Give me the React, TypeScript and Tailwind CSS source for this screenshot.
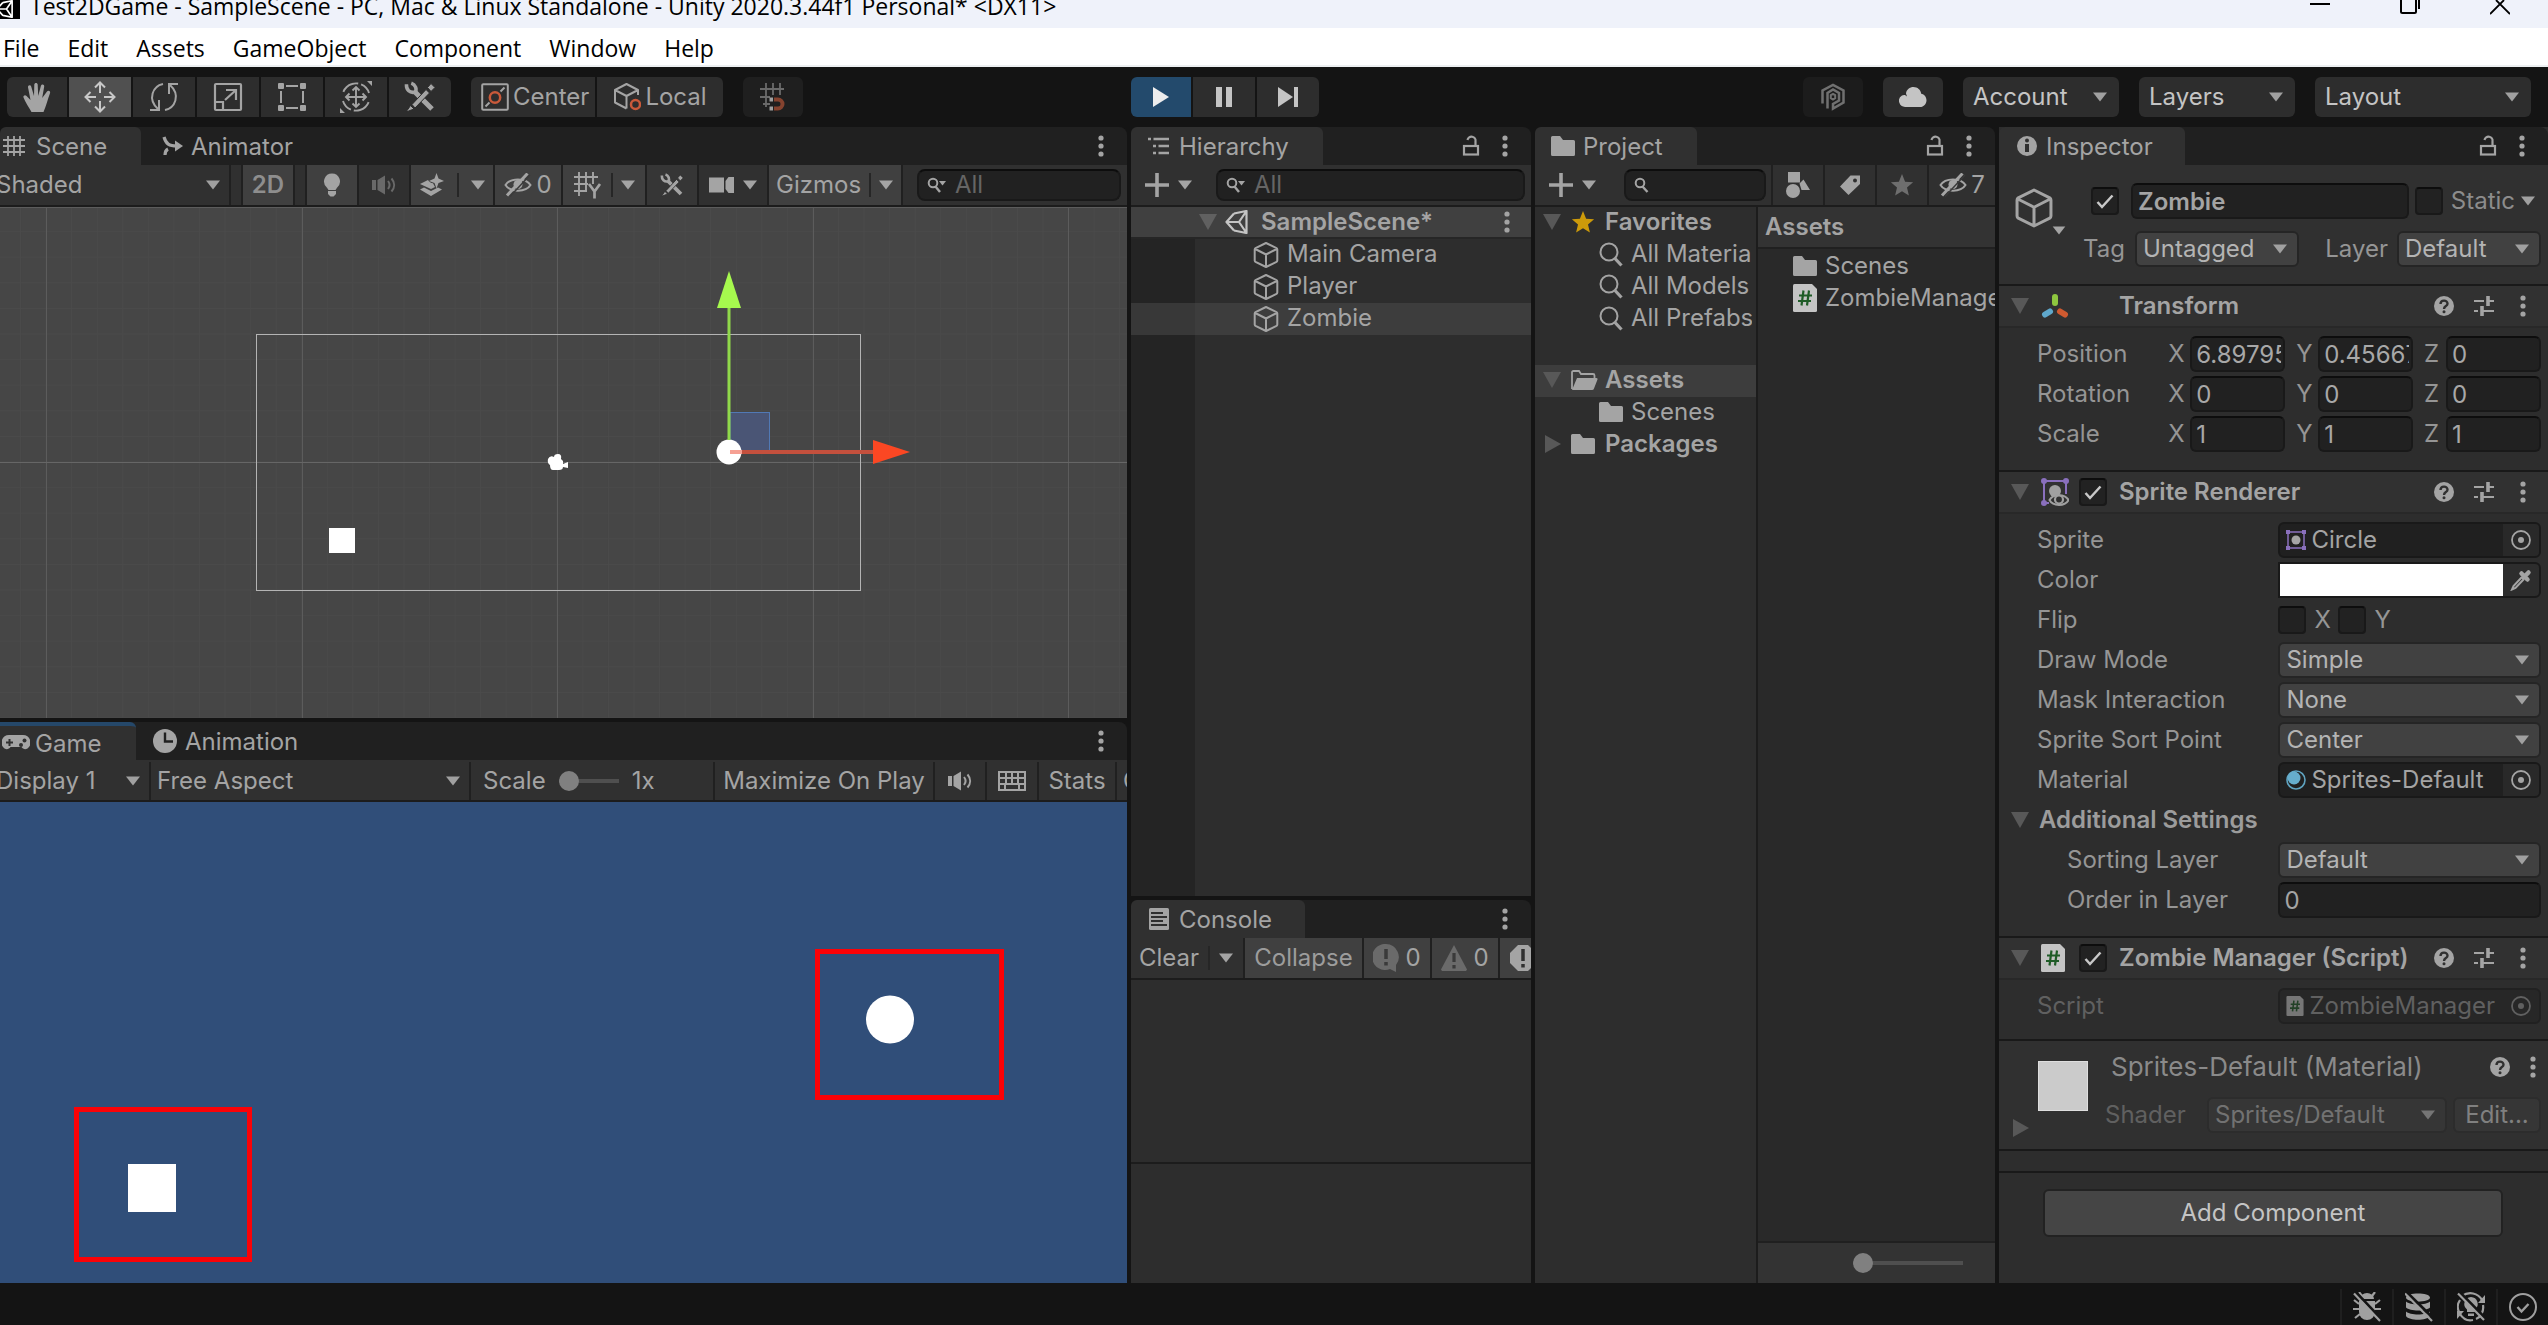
import React from "react";

type IconProps = { className?: string };

function Icon({ box, className, children }: { box: string; className: string; children: React.ReactNode }) {
  return (
    <svg viewBox={box} className={"shrink-0 " + className} fill="none" stroke="currentColor" aria-hidden="true">
      {children}
    </svg>
  );
}

const Down = ({ className = "w-[14px] h-[10px]" }: IconProps) => (
  <Icon box="0 0 14 10" className={className}>
    <path d="M0 0.5h14L7 9.5z" fill="currentColor" stroke="none" />
  </Icon>
);

const Dots = () => (
  <Icon box="0 0 6 22" className="w-[6px] h-[22px]">
    <g fill="currentColor" stroke="none">
      <circle cx="3" cy="3" r="2.6" />
      <circle cx="3" cy="11" r="2.6" />
      <circle cx="3" cy="19" r="2.6" />
    </g>
  </Icon>
);

const Lock = () => (
  <Icon box="0 0 18 22" className="w-[18px] h-[22px]">
    <rect x="2" y="11" width="14" height="8.5" strokeWidth="2.2" />
    <path d="M13.5 11V6.5a4 4 0 0 0-8-1.5" strokeWidth="2.2" />
  </Icon>
);

const Foldout = ({ className = "text-[#585858]" }: IconProps) => (
  <Icon box="0 0 18 16" className={"w-[18px] h-4 " + className}>
    <path d="M0 0h18L9 16z" fill="currentColor" stroke="none" />
  </Icon>
);

const FoldoutRight = () => (
  <Icon box="0 0 16 18" className="w-4 h-[18px] text-[#585858]">
    <path d="M0 0v18L16 9z" fill="currentColor" stroke="none" />
  </Icon>
);

const Hand = () => (
  <Icon box="0 0 30 32" className="w-[30px] h-8">
    <path
      d="M9.5 30C7 25.500 3.500 20.500 1.500 15.500c-.6-1.800 1.500-3 2.800-1.700L8.500 18 6 5.200C5.700 3 8.600 2.400 9.200 4.500L12 14 12.300 2.600c.1-2.300 3.300-2.300 3.400 0L16.200 14 19 3.600c.6-2 3.600-1.400 3.200.8L20.200 16 25 9.500c1.400-1.700 3.900-.3 3 1.700C25.800 17 24 24.500 21.500 30z"
      fill="currentColor"
      stroke="none"
      transform="translate(0 1)"
    />
  </Icon>
);

const Move = () => (
  <Icon box="0 0 32 32" className="w-8 h-8 text-[#c8c8c8]">
    <g strokeWidth="2">
      <path d="M16 2v10M16 20v10M2 16h10M20 16h10" />
      <path d="M11 6.500L16 1.500l5 5M11 25.500l5 5 5-5M6.500 11l-5 5 5 5M25.500 11l5 5-5 5" />
    </g>
  </Icon>
);

const Rotate = () => (
  <Icon box="0 0 32 32" className="w-8 h-8">
    <g strokeWidth="2">
      <path d="M15 3C5 5 -1 18 10 28M2 29h9V19" />
      <path d="M17 29C27 27 33 14 22 4M30 3h-9v10" />
    </g>
  </Icon>
);

const Scale = () => (
  <Icon box="0 0 30 30" className="w-[30px] h-[30px]">
    <g strokeWidth="2.2">
      <rect x="2" y="2" width="26" height="26" rx="1" />
      <path d="M2 20h8v8M12 18L23 8M13 8h10v10" />
    </g>
  </Icon>
);

const RectTool = () => (
  <Icon box="0 0 30 30" className="w-[30px] h-[30px]">
    <g fill="currentColor" stroke="none">
      <rect x="1" y="1" width="6" height="6" rx="1" />
      <rect x="23" y="1" width="6" height="6" rx="1" />
      <rect x="1" y="23" width="6" height="6" rx="1" />
      <rect x="23" y="23" width="6" height="6" rx="1" />
    </g>
    <path d="M9 4h12M9 26h12M4 9v12M26 9v12" strokeWidth="2" />
  </Icon>
);

const TransformTool = () => (
  <Icon box="0 0 34 34" className="w-[34px] h-[34px]">
    <g strokeWidth="1.900">
      <path d="M13 4A13.500 13.500 0 0 0 4 13M21 30A13.500 13.500 0 0 0 30 21M4 21A13.500 13.500 0 0 0 21 30M30 13A13.500 13.500 0 0 0 13 4" strokeDasharray="12 3" />
      <path d="M17 7v20M7 17h20M13.500 10.500L17 7l3.500 3.500M13.500 23.500L17 27l3.500-3.500M10.500 13.500L7 17l3.500 3.500M23.500 13.500L27 17l-3.500 3.500" />
    </g>
    <path d="M28 1h5v5zM1 28v5h5z" fill="currentColor" stroke="none" />
  </Icon>
);

const Tools = ({ className = "w-8 h-8" }: IconProps) => (
  <Icon box="0 0 32 32" className={className}>
    <path d="M10 10L28 28" strokeWidth="5" strokeDasharray="8 4 20" />
    <path d="M3 2.500C2 8 5 12 10.500 11.500 13 9 12 4 8 2" strokeWidth="3.500" transform="rotate(-8 8 7)" />
    <path d="M8 23.500L22 8.500l3.500 3.500L11 27z M2 31l4.500-6.500L10 28z M23.500 6.500L27 2.500l4 4-4 4z" fill="currentColor" stroke="#2b2b2b" strokeWidth="1" />
  </Icon>
);

const Pivot = () => (
  <Icon box="0 0 28 28" className="w-7 h-7">
    <rect x="1.200" y="1.200" width="25.600" height="25.600" rx="1" strokeWidth="2" />
    <path d="M4.500 23.500l4-4M19.500 8.500l4-4" strokeWidth="2" />
    <circle cx="14" cy="14.500" r="5.200" stroke="#c8593a" strokeWidth="2.500" />
  </Icon>
);

const Cube = ({ className = "w-7 h-7" }: IconProps) => (
  <Icon box="0 0 28 28" className={className}>
    <path d="M14 2l10.500 5.200q.8.500.8 1.400v10.800q0 .9-.8 1.400L14 26 3.500 20.800q-.8-.5-.8-1.400V8.600q0-.9.8-1.400zM3.200 8L14 13.500 24.800 8M14 13.500V26" strokeWidth="2" strokeLinejoin="round" />
  </Icon>
);

const LocalCube = () => (
  <Icon box="0 0 28 30" className="w-7 h-[30px]">
    <path d="M25 13V8L13.500 2 2 8v12.500L13.500 26.500M2 8l11.500 6L25 8M13.500 14v12.500" strokeWidth="2" strokeLinejoin="round" />
    <circle cx="22.500" cy="22.500" r="4.500" stroke="#c8593a" strokeWidth="2.500" fill="#2d2d2d" />
  </Icon>
);

const Snap = () => (
  <Icon box="0 0 28 30" className="w-7 h-[30px] text-[#6a6a6a]">
    <path d="M7 1v24M14 1v12M21 1v12M1 7h24M1 15h10M4 22h7" strokeWidth="1.800" />
    <path d="M15 17.500h4a4.500 4.500 0 0 1 0 9h-4" stroke="#85432f" strokeWidth="4" />
    <path d="M10.500 15.500h3.500v4h-3.500zM10.500 24.500h3.500v4h-3.500z" fill="#a0a0a0" stroke="none" />
  </Icon>
);

const Plastic = () => (
  <Icon box="0 0 26 28" className="w-[26px] h-7 text-[#707070]">
    <path d="M2.500 20.500V7.500L13 1.800l10.500 5.700v12L13 25.500v-4.500l6-3.500V10L13 6.500 7.500 10v15.500" strokeWidth="2.500" />
    <path d="M10.800 12.200L13 11l2.200 1.200v3L13 16.500l-2.200-1.300z" strokeWidth="2" />
  </Icon>
);

const Cloud = () => (
  <Icon box="0 0 28 22" className="w-7 h-[22px] text-[#c4c4c4]">
    <path d="M6.500 21A6.200 6.200 0 0 1 3 9.500C3.800 9 5 8.700 6 9l2 1.500L7 7.500C7.500 3.500 10.800 1 14.500 1c4 0 7.200 2.800 7.700 6.700 3 .3 5.300 3.300 5.300 6.500 0 3.500-2.700 6.800-6.500 6.800z" fill="currentColor" stroke="none" />
  </Icon>
);

const GridHash = () => (
  <Icon box="0 0 22 22" className="w-[22px] h-[22px]">
    <path d="M5 1v20M11 1v20M17 1v20M0 5h22M0 11h22M0 17h22" strokeWidth="1.800" />
  </Icon>
);

const AnimatorIcon = () => (
  <Icon box="0 0 22 20" className="w-[22px] h-5">
    <path d="M2 1C4 8 7 10 15 10M3 19c0-3 1-5 3-6" strokeWidth="3.200" />
    <path d="M13 4.500L21 10l-8 5.500z" fill="currentColor" stroke="none" />
  </Icon>
);

const Bulb = () => (
  <Icon box="0 0 18 24" className="w-[18px] h-6">
    <path d="M9 .5a8 8 0 0 1 5 14.200L12.500 17h-7L4 14.700A8 8 0 0 1 9 .5zM5 18h8v3l-2.500 2.500h-3L5 21z" fill="currentColor" stroke="none" />
  </Icon>
);

const Speaker = ({ className = "" }: IconProps) => (
  <Icon box="0 0 26 20" className={"w-[26px] h-5 " + className}>
    <path d="M1 5h4v10H1zM6.500 5L14 .5v19L6.500 15z" fill="currentColor" stroke="none" />
    <path d="M17 6c2 2.500 2 5.500 0 8M20.500 3.500c3.500 4 3.500 9 0 13" strokeWidth="2" />
  </Icon>
);

const Effects = () => (
  <Icon box="0 0 26 24" className="w-[26px] h-6">
    <g fill="currentColor" stroke="none">
      <path d="M1 16.500l4-2 7 3.500 7-3.500 4 2L12 23z" />
      <path d="M1 11l8-4c1 2 3 3 5 3.200L16 14l-4 2z" />
      <path d="M17.500 0l2 5.500L25 8l-5.500 2-2 5.500-2-5.500L10 8l5.500-2.500z" />
    </g>
  </Icon>
);

const EyeOff = () => (
  <Icon box="0 0 28 24" className="w-7 h-6">
    <path d="M1.500 12C6 4.500 22 4.500 26.500 12 22 19.500 6 19.500 1.500 12z" strokeWidth="2" />
    <circle cx="14" cy="11.500" r="4.500" fill="currentColor" stroke="none" />
    <path d="M3 22.500L23.500.5" strokeWidth="3" />
    <path d="M6 23.500L26 2" stroke="#3a3a3a" strokeWidth="1.500" />
  </Icon>
);

const GridY = () => (
  <Icon box="0 0 30 28" className="w-[30px] h-7">
    <path d="M6 1v24M13 1v19M20 1v12M1 6h24M1 13h14M1 20h13" strokeWidth="1.900" />
    <path d="M16 13l5.500 7.500L27 13M21.500 20v7.500" strokeWidth="2.700" />
  </Icon>
);

const CameraIcon = () => (
  <Icon box="0 0 26 18" className="w-[26px] h-[18px]">
    <path d="M0 1.500h15v15H0zM16.500 5l3-4H25v16h-5.500l-3-4z" fill="currentColor" stroke="none" />
  </Icon>
);

const SearchIcon = () => (
  <Icon box="0 0 20 16" className="w-5 h-4">
    <circle cx="6" cy="6" r="4.300" strokeWidth="2" />
    <path d="M8.500 9.500L13 15" strokeWidth="2.400" />
    <path d="M12 4h7l-3.500 4.500z" fill="currentColor" stroke="none" />
  </Icon>
);

const SearchPlain = () => (
  <Icon box="0 0 16 16" className="w-4 h-4">
    <circle cx="6" cy="6" r="4.300" strokeWidth="2" />
    <path d="M8.500 9.500L13.500 15" strokeWidth="2.400" />
  </Icon>
);

const BigSearch = () => (
  <Icon box="0 0 24 26" className="w-6 h-[26px]">
    <circle cx="10" cy="11" r="8.500" strokeWidth="2" />
    <path d="M16 17.500l6.500 7" strokeWidth="3.200" />
  </Icon>
);

const HierarchyIcon = () => (
  <Icon box="0 0 22 18" className="w-[22px] h-[18px]">
    <path d="M0 2h3M5.500 2H21M5 9h3M10.500 9H21M5 16h3M10.500 16H21" strokeWidth="2.300" />
  </Icon>
);

const Folder = () => (
  <Icon box="0 0 24 20" className="w-6 h-5">
    <path d="M0 1.500Q0 0 1.500 0H9l3 4h10.500Q24 4 24 5.500v13q0 1.500-1.500 1.500h-21Q0 20 0 18.500z" fill="currentColor" stroke="none" />
  </Icon>
);

const FolderOpen = () => (
  <Icon box="0 0 28 20" className="w-7 h-5">
    <path d="M2 19V2.500Q2 1 3.500 1H9l2 3h12q1.500 0 1.500 1.500V8" strokeWidth="1.800" />
    <path d="M7 8h19.500q1.500 0 1 1.500L24 18.500Q23.600 20 22 20H2z" fill="currentColor" stroke="none" />
  </Icon>
);

const Star = ({ className = "" }: IconProps) => (
  <Icon box="0 0 24 24" className={"w-6 h-6 " + className}>
    <path d="M12 1l3.100 7.700 8 .6-6.100 5.200 1.900 8L12 18.200 5.100 22.500l1.900-8L.9 9.300l8-.6z" fill="currentColor" stroke="none" />
  </Icon>
);

const Shapes = () => (
  <Icon box="0 0 24 26" className="w-6 h-[26px]">
    <path d="M2 0h12v10.500H2zM17.500 7.500L24 18h-8.500l-2-6.500z" fill="currentColor" stroke="none" />
    <circle cx="7" cy="19" r="7" fill="currentColor" stroke="none" />
  </Icon>
);

const Tag = () => (
  <Icon box="0 0 20 20" className="w-5 h-5">
    <path d="M0 11.500L10.500.5H20V9L8.500 20z" fill="currentColor" stroke="none" />
    <circle cx="15" cy="5.500" r="2" fill="#2f2f2f" stroke="none" />
  </Icon>
);

const ScriptIcon = ({ className = "w-6 h-7" }: IconProps) => (
  <Icon box="0 0 24 28" className={className}>
    <path d="M0 1.500Q0 0 1.500 0H19l5 5v21.500q0 1.500-1.500 1.500h-21Q0 28 0 26.500z" fill="#c4c4c4" stroke="none" />
    <path d="M10.500 6.500l-2 15M16 6.500l-2 15M6 11.500h13M5 17h13" stroke="#1f5c27" strokeWidth="2.200" />
  </Icon>
);

const UnityMark = ({ className = "w-6 h-6" }: IconProps) => (
  <Icon box="0 0 24 24" className={className}>
    <path d="M9 3.500L1.500 12 9 20.500M9 3.500L21.500 1v22L9 20.500M1.500 12H14M14 12l7.500-11M14 12l7.500 11" strokeWidth="2.200" strokeLinejoin="round" />
  </Icon>
);

const InfoIcon = () => (
  <Icon box="0 0 20 20" className="w-5 h-5">
    <circle cx="10" cy="10" r="10" fill="currentColor" stroke="none" />
    <circle cx="10" cy="4.500" r="2" fill="#303030" stroke="none" />
    <path d="M10 8v8" stroke="#303030" strokeWidth="4" />
  </Icon>
);

const HelpIcon = () => (
  <Icon box="0 0 20 20" className="w-5 h-5">
    <circle cx="10" cy="10" r="10" fill="currentColor" stroke="none" />
    <path d="M6.500 8c0-4.500 7-4.500 7-.3 0 2.500-3.500 2.300-3.500 5.300" stroke="#303030" strokeWidth="2.400" />
    <circle cx="10" cy="15.800" r="1.500" fill="#303030" stroke="none" />
  </Icon>
);

const Preset = () => (
  <Icon box="0 0 20 20" className="w-5 h-5">
    <path d="M0 5h10M16 5h4M0 15h4M10 15h10" strokeWidth="2" />
    <path d="M14 0v10M8 10v10" strokeWidth="3.600" />
    <path d="M14 5h4M8 15h4" strokeWidth="2" />
  </Icon>
);

const Gamepad = () => (
  <Icon box="0 0 28 16" className="w-7 h-4">
    <path d="M7 0h14a7.500 7.500 0 0 1 4.500 13.500c-2.500 1.500-4.500.5-6-1.500h-11c-1.500 2-3.500 3-6 1.500A7.500 7.500 0 0 1 7 0z" fill="currentColor" stroke="none" />
    <path d="M4 7.500h7M7.500 4v7" stroke="#303030" strokeWidth="2" />
    <circle cx="19" cy="10" r="2" fill="#303030" stroke="none" />
    <circle cx="22.500" cy="5.500" r="2" fill="#303030" stroke="none" />
  </Icon>
);

const Clock = () => (
  <Icon box="0 0 24 24" className="w-6 h-6">
    <circle cx="12" cy="12" r="12" fill="currentColor" stroke="none" />
    <path d="M12 3.500V12.500h8" stroke="#202020" strokeWidth="2.400" />
  </Icon>
);

const Keyboard = () => (
  <Icon box="0 0 28 20" className="w-7 h-5">
    <path d="M1 1h26v18H1zM1 7h26M1 13h26M8 1v12M14 1v12M20 1v12M7 13v6M21 13v6" strokeWidth="2" />
  </Icon>
);

const ConsoleIcon = () => (
  <Icon box="0 0 20 22" className="w-5 h-[22px]">
    <rect width="20" height="22" rx="1.500" fill="currentColor" stroke="none" />
    <path d="M2 5h12M2 9h16M2 13h12M2 17h16" stroke="#303030" strokeWidth="2" />
  </Icon>
);

const Picker = () => (
  <Icon box="0 0 20 20" className="w-5 h-5">
    <circle cx="10" cy="10" r="9" strokeWidth="1.800" />
    <circle cx="10" cy="10" r="3" fill="currentColor" stroke="none" />
  </Icon>
);

const Dropper = () => (
  <Icon box="0 0 22 22" className="w-[22px] h-[22px]">
    <path d="M11.500 4.500l6 6M13.500 8.500L18.500 3.500" strokeWidth="4.500" strokeLinecap="round" />
    <path d="M12 8l-8.500 9-1.500 3.500L5.500 19l8.500-9" strokeWidth="2" />
  </Icon>
);

const SpriteIcon = () => (
  <Icon box="0 0 20 20" className="w-5 h-5">
    <rect x="2" y="2" width="16" height="16" stroke="#8a70bd" strokeWidth="1.500" />
    <path d="M0 0h4v4H0zM16 0h4v4h-4zM0 16h4v4H0zM16 16h4v4h-4z" fill="#8a70bd" stroke="none" />
    <circle cx="10" cy="10" r="4.500" fill="#a5a5a5" stroke="none" />
  </Icon>
);

const SpriteRendererIcon = () => (
  <Icon box="0 0 28 28" className="w-7 h-7">
    <path d="M25 16V3H3v22h5" stroke="#8a70bd" strokeWidth="2" />
    <g fill="#8a70bd" stroke="none">
      <circle cx="3" cy="3" r="3" />
      <circle cx="25" cy="3" r="3" />
      <circle cx="3" cy="25" r="3" />
    </g>
    <circle cx="14" cy="13" r="6" fill="#a0a0a0" stroke="none" />
    <path d="M8.500 22C12 15.500 24 15.500 27.500 22 24 28.500 12 28.500 8.500 22z" fill="#303030" stroke="#a0a0a0" strokeWidth="2" />
    <circle cx="18" cy="21.500" r="4" fill="#303030" stroke="#a0a0a0" strokeWidth="2.200" />
  </Icon>
);

const TransformIcon = () => (
  <Icon box="0 0 28 26" className="w-7 h-[26px]">
    <g strokeWidth="6" strokeLinecap="round">
      <path d="M14 4v6" stroke="#8ec63f" />
      <path d="M9 18.500l-5 3" stroke="#5fa8cc" />
      <path d="M19 18.500l5 3" stroke="#cf5a30" />
    </g>
  </Icon>
);

const MaterialIcon = () => (
  <Icon box="0 0 20 20" className="w-5 h-5">
    <circle cx="10" cy="10" r="9" stroke="#5fa3c0" strokeWidth="1.600" />
    <circle cx="8" cy="8" r="6.500" fill="#66adcc" stroke="none" />
  </Icon>
);

const IconButton = ({ label, className, children }: { label: string; className: string; children: React.ReactNode }) => (
  <button type="button" aria-label={label} title={label} className={"flex items-center justify-center shrink-0 " + className}>
    {children}
  </button>
);

function Pick({ label, value, className, arrow = "mr-3" }: { label: string; value: string; className: string; arrow?: string }) {
  return (
    <span className={"grid items-center " + className}>
      <select aria-label={label} defaultValue={value} className="col-start-1 row-start-1 appearance-none bg-transparent w-full h-full outline-none truncate">
        <option>{value}</option>
      </select>
      <span className={"col-start-1 row-start-1 justify-self-end pointer-events-none text-[#a0a0a0] " + arrow}>
        <Down />
      </span>
    </span>
  );
}

function Check({ label, checked, className = "" }: { label: string; checked?: boolean; className?: string }) {
  return (
    <span className={"grid w-7 h-7 shrink-0 " + className}>
      <input
        type="checkbox"
        aria-label={label}
        defaultChecked={checked}
        className="peer col-start-1 row-start-1 appearance-none w-7 h-7 rounded-[4px] bg-[#222] border-2 border-[#191919] border-t-[#0d0d0d]"
      />
      <svg viewBox="0 0 28 28" className="col-start-1 row-start-1 w-7 h-7 pointer-events-none opacity-0 peer-checked:opacity-100" fill="none">
        <path d="M6.500 15l4.500 5L21.500 8.500" stroke="#c8c8c8" strokeWidth="2.500" />
      </svg>
    </span>
  );
}

const fieldBox = "bg-[#212121] border-2 border-[#191919] border-t-[#0d0d0d] rounded-[6px]";

function Search({ placeholder = "", label, className, icon }: { placeholder?: string; label: string; className: string; icon: React.ReactNode }) {
  return (
    <label className={"flex items-center gap-2 h-8 pl-2 rounded-lg overflow-hidden bg-[#212121] border-2 border-[#191919] border-t-[#0d0d0d] " + className}>
      {icon}
      <input aria-label={label} placeholder={placeholder} className="min-w-0 flex-1 bg-transparent outline-none placeholder:text-[#656565]" />
    </label>
  );
}

function Tab({ icon, title, className, active }: { icon: React.ReactNode; title: string; className: string; active?: boolean }) {
  return (
    <button
      type="button"
      role="tab"
      aria-selected={!!active}
      className={"flex items-center h-full whitespace-nowrap " + (active ? "bg-[#303030] rounded-t-[6px] " : "") + className}
    >
      {icon}
      <span className="pt-[2px]">{title}</span>
    </button>
  );
}

function TabBar({ children, lock, menuPad = "pr-[23px]" }: { children: React.ReactNode; lock?: boolean; menuPad?: string }) {
  return (
    <div role="tablist" className={"flex items-center h-[38px] shrink-0 bg-[#202020] rounded-t-lg " + menuPad}>
      {children}
      <div className="ml-auto flex items-center gap-[22px]">
        {lock && <IconButton label="Lock" className=""><Lock /></IconButton>}
        <IconButton label="Panel menu" className=""><Dots /></IconButton>
      </div>
    </div>
  );
}

function TitleBar() {
  return (
    <header className="bg-white text-black font-['Open_Sans','Noto_Sans',sans-serif] text-[23px]">
      <div className="flex items-start h-7 bg-[#eff2fa] overflow-hidden">
        <span className="w-5 h-[19px] bg-black text-white overflow-hidden flex items-start shrink-0">
          <UnityMark className="w-[18px] h-[18px] -ml-1" />
        </span>
        <h1 className="ml-[10px] -mt-[10px] leading-8 whitespace-nowrap">Test2DGame - SampleScene - PC, Mac &amp; Linux Standalone - Unity 2020.3.44f1 Personal* &lt;DX11&gt;</h1>
        <div className="ml-auto flex items-start pr-[38px] gap-[70px]">
          <IconButton label="Minimize" className="h-5 w-5">
            <Icon box="0 0 20 20" className="w-5 h-5"><path d="M0 4h20" strokeWidth="2" /></Icon>
          </IconButton>
          <IconButton label="Restore" className="h-5 w-5">
            <Icon box="0 0 20 20" className="w-5 h-5"><path d="M1 0v11.500q0 1.500 1.500 1.500h12q1.500 0 1.500-1.500V0M19 0v9" strokeWidth="2" /></Icon>
          </IconButton>
          <IconButton label="Close" className="h-5 w-5">
            <Icon box="0 0 20 20" className="w-5 h-5"><path d="M0 14L14 0M20 14L6 0" strokeWidth="1.800" /></Icon>
          </IconButton>
        </div>
      </div>
      <nav className="flex items-center h-[39px] pt-[2px] px-[3px] gap-7 border-b-2 border-[#edf0f2] leading-8">
        {["File", "Edit", "Assets", "GameObject", "Component", "Window", "Help"].map((m) => (
          <button type="button" key={m}>{m}</button>
        ))}
      </nav>
    </header>
  );
}

function Toolbar() {
  const tool = "w-[62px] h-10 bg-[#2d2d2d]";
  return (
    <div className="grid grid-cols-[1127fr_1417fr] gap-1 h-[60px] items-center text-[24px]">
      <div className="flex items-center gap-[2px] pl-[7px] min-w-0">
        <IconButton label="Hand" className="w-[60px] h-10 bg-[#2d2d2d] rounded-l-md"><Hand /></IconButton>
        <IconButton label="Move" className="w-[62px] h-10 bg-[#505050]"><Move /></IconButton>
        <IconButton label="Rotate" className={tool}><Rotate /></IconButton>
        <IconButton label="Scale" className={tool}><Scale /></IconButton>
        <IconButton label="Rect" className={tool}><RectTool /></IconButton>
        <IconButton label="Transform" className={tool}><TransformTool /></IconButton>
        <IconButton label="Custom tools" className={tool + " rounded-r-md"}><Tools /></IconButton>
        <button type="button" className="ml-[18px] flex items-center pl-[10px] gap-1 w-[124px] h-10 bg-[#2d2d2d] rounded-l-md"><Pivot />Center</button>
        <button type="button" className="flex items-center justify-center gap-1 w-[126px] h-10 bg-[#2d2d2d] rounded-r-md"><LocalCube />Local</button>
        <IconButton label="Snap" className="ml-[18px] w-[60px] h-10 bg-[#1f1f1f] rounded-md"><Snap /></IconButton>
      </div>
      <div className="flex items-center text-[#c4c4c4] pr-[17px]">
        <IconButton label="Play" className="w-[60px] h-10 bg-[#234a6c] rounded-l-md text-[#ececec]">
          <Icon box="0 0 16 20" className="w-4 h-5"><path d="M0 0l16 10L0 20z" fill="currentColor" stroke="none" /></Icon>
        </IconButton>
        <IconButton label="Pause" className="ml-[2px] w-[62px] h-10 bg-[#2d2d2d]">
          <Icon box="0 0 16 20" className="w-4 h-5"><path d="M3 0v20M13 0v20" strokeWidth="6" /></Icon>
        </IconButton>
        <IconButton label="Step" className="ml-[2px] w-[62px] h-10 bg-[#2d2d2d] rounded-r-md">
          <Icon box="0 0 20 20" className="w-5 h-5"><path d="M0 0l15 10L0 20z" fill="currentColor" stroke="none" /><path d="M18 0v20" strokeWidth="4" /></Icon>
        </IconButton>
        <div className="ml-auto flex items-center gap-5">
          <IconButton label="Plastic SCM" className="w-[60px] h-10 bg-[#1c1c1c] rounded-md"><Plastic /></IconButton>
          <IconButton label="Services" className="w-[60px] h-10 bg-[#2d2d2d] rounded-md"><Cloud /></IconButton>
          <Pick label="Account" value="Account" className="w-[156px] h-10 pl-[10px] bg-[#2d2d2d] rounded-md" />
          <Pick label="Layers" value="Layers" className="w-[156px] h-10 pl-[10px] bg-[#2d2d2d] rounded-md" />
          <Pick label="Layout" value="Layout" className="w-[216px] h-10 pl-[10px] bg-[#2d2d2d] rounded-md" />
        </div>
      </div>
    </div>
  );
}

function SceneView() {
  const minor = Array.from({ length: 46 }, (_, i) => i);
  return (
    <svg viewBox="0 -2 1127 511" preserveAspectRatio="xMidYMid slice" className="block w-full h-full bg-[#464646]" role="img" aria-label="Scene view">
      <g stroke="#4b4b4b" strokeWidth="1">
        {minor.map((i) => (
          <path key={"v" + i} d={`M${-5 + i * 25.56} -2V509`} />
        ))}
        {minor.slice(0, 21).map((i) => (
          <path key={"h" + i} d={`M0 ${-3 + i * 25.6}H1127`} />
        ))}
      </g>
      <g stroke="#5c5c5c" strokeWidth="1">
        <path d="M46.500 -2V509M302.500 -2V509M557.500 -2V509M813.500 -2V509M1068.500 -2V509M0 -1.500H1127" />
        <path d="M0 253.500H1127" stroke="#666" />
      </g>
      <rect x="256.500" y="125.500" width="604" height="256" fill="none" stroke="#b4b4b4" />
      <rect x="329" y="319" width="26" height="25" fill="#fff" />
      <path d="M548 250q2-4 6-2 0-3 4-3 4 0 3 5l2 2v3l5-2v6l-5-1q0 3-4 3h-6q-3 0-3-5-3-2-2-6z" fill="#fff" />
      <rect x="730" y="203.500" width="39.500" height="40" fill="#4a5575" stroke="#5179b5" />
      <circle cx="729" cy="243" r="12.500" fill="#fff" />
      <path d="M742 243H873" stroke="#c4503d" strokeWidth="4" />
      <path d="M730 243H742" stroke="#f6a093" strokeWidth="4" />
      <path d="M729 99V231" stroke="#90d94a" strokeWidth="3" />
      <path d="M729 62l12 37h-24z" fill="#a6f94e" />
      <path d="M910 243l-37 12v-24z" fill="#fb4723" />
    </svg>
  );
}

function ScenePanel() {
  const cell = "h-10 border-r-2 border-[#202020] ";
  return (
    <section className="flex flex-col flex-[591_1_0] min-h-0 min-w-0">
      <TabBar>
        <Tab active icon={<GridHash />} title="Scene" className="pl-[3px] gap-[11px] w-[141px]" />
        <Tab icon={<AnimatorIcon />} title="Animator" className="pl-[21px] gap-[7px]" />
      </TabBar>
      <div className="flex items-center h-[42px] shrink-0 bg-[#303030] border-b-2 border-[#1c1c1c] border-t-0">
        <Pick label="Shading mode" value="Shaded" className={cell + "-ml-1 w-[235px]"} arrow="mr-[9px]" />
        <span className={cell + "w-3"} />
        <button type="button" className={cell + "w-[52px] bg-[#404040] font-semibold text-[#8e8e8e]"}>2D</button>
        <span className={cell + "w-3"} />
        <IconButton label="Lighting" className={cell + "w-[52px] bg-[#404040]"}><Bulb /></IconButton>
        <IconButton label="Audio" className={cell + "w-[52px] text-[#696969]"}><Speaker /></IconButton>
        <IconButton label="Effects" className={cell + "w-[84px] bg-[#404040] gap-3"}>
          <Effects />
          <span className="w-[2px] h-6 bg-[#262626]" />
          <Down />
        </IconButton>
        <button type="button" aria-label="Hidden objects" className={cell + "w-[68px] bg-[#404040] flex items-center justify-center"}><EyeOff /><span className="ml-1">0</span></button>
        <IconButton label="Grid" className={cell + "w-[84px] bg-[#404040] gap-2"}>
          <GridY />
          <span className="w-[2px] h-6 bg-[#262626]" />
          <Down />
        </IconButton>
        <IconButton label="Component tools" className={cell + "w-[52px] bg-[#363636]"}><Tools className="w-6 h-6" /></IconButton>
        <IconButton label="Camera" className={cell + "w-[70px] gap-2"}><CameraIcon /><Down /></IconButton>
        <button type="button" className={cell + "w-[134px] bg-[#404040] flex items-center pl-[7px] gap-2 shrink-0"}>
          Gizmos
          <span className="w-[2px] h-6 bg-[#262626]" />
          <Down />
        </button>
        <Search label="Search scene" placeholder="All" icon={<SearchIcon />} className="flex-1 min-w-0 ml-[14px] mr-[6px]" />
      </div>
      <div className="flex-1 min-h-0"><SceneView /></div>
    </section>
  );
}

function GamePanel() {
  const cell = "h-[38px] border-r-2 border-[#202020] shrink-0 ";
  return (
    <section className="flex flex-col flex-[561_1_0] min-h-0 min-w-0">
      <TabBar>
        <Tab active icon={<Gamepad />} title="Game" className="pl-[2px] gap-[5px] w-[136px] border-t-4 border-[#25486a] rounded-tl-none" />
        <Tab icon={<Clock />} title="Animation" className="pl-[17px] gap-2" />
      </TabBar>
      <div className="flex items-center h-[42px] pt-[2px] shrink-0 bg-[#303030] border-b-2 border-[#1c1c1c] overflow-hidden">
        <Pick label="Display" value="Display 1" className={cell + "-ml-1 w-[155px]"} arrow="mr-[9px]" />
        <Pick label="Aspect" value="Free Aspect" className={cell + "pl-[6px] w-[320px]"} arrow="mr-[9px]" />
        <label className={cell + "flex items-center w-[244px] pl-3"}>
          Scale
          <input
            type="range"
            defaultValue={0}
            className="ml-[13px] w-[60px] h-5 appearance-none bg-[linear-gradient(#4f4f4f,#4f4f4f)] bg-[length:100%_4px] bg-center bg-no-repeat [&::-webkit-slider-thumb]:appearance-none [&::-webkit-slider-thumb]:size-5 [&::-webkit-slider-thumb]:rounded-full [&::-webkit-slider-thumb]:bg-[#808080]"
          />
          <span className="ml-[13px]">1x</span>
        </label>
        <button type="button" className={cell + "w-[220px] whitespace-nowrap"}>Maximize On Play</button>
        <IconButton label="Mute audio" className={cell + "w-[52px]"}><Speaker /></IconButton>
        <IconButton label="Shortcuts" className={cell + "w-[52px]"}><Keyboard /></IconButton>
        <button type="button" className={cell + "w-[78px]"}>Stats</button>
        <button type="button" className="pl-[6px] h-[38px]">Gizmos</button>
      </div>
      <div className="flex-1 min-h-0">
        <svg viewBox="0 0 1127 481" preserveAspectRatio="xMidYMid slice" className="block w-full h-full bg-[#304e79]" role="img" aria-label="Game view">
          <rect x="76.500" y="307.500" width="173" height="150" fill="none" stroke="#fb0207" strokeWidth="5" />
          <rect x="817.500" y="149.500" width="184" height="146" fill="none" stroke="#fb0207" strokeWidth="5" />
          <rect x="128" y="362" width="48" height="48" fill="#fff" />
          <circle cx="890" cy="217.500" r="24" fill="#fff" />
        </svg>
      </div>
    </section>
  );
}

const PlusMenu = () => (
  <IconButton label="Create" className="gap-[9px] ml-[14px]">
    <Icon box="0 0 24 24" className="w-6 h-6"><path d="M12 0v24M0 12h24" strokeWidth="3.600" /></Icon>
    <Down />
  </IconButton>
);

function HierarchyPanel() {
  return (
    <section className="flex flex-col flex-[769_1_0] min-h-0">
      <TabBar lock>
        <Tab active icon={<HierarchyIcon />} title="Hierarchy" className="pl-[17px] gap-[9px] w-[192px]" />
      </TabBar>
      <div className="flex items-center h-[42px] shrink-0 bg-[#303030] border-b-2 border-[#1c1c1c]">
        <PlusMenu />
        <Search label="Search hierarchy" placeholder="All" icon={<SearchIcon />} className="flex-1 min-w-0 ml-6 mr-[6px]" />
      </div>
      <div className="flex items-center h-8 shrink-0 pl-[68px] pr-[21px] bg-[#404040] border-b-2 border-[#262626] font-semibold">
        <Foldout className="text-[#606060]" />
        <UnityMark className="ml-2 w-6 h-6 text-[#c4c4c4]" />
        <span className="ml-3">SampleScene*</span>
        <span className="ml-auto"><Dots /></span>
      </div>
      <ul className="flex-1 min-h-0 bg-[linear-gradient(90deg,#242424_64px,#2d2d2d_64px)]">
        {["Main Camera", "Player", "Zombie"].map((n) => (
          <li key={n} className={"flex items-center h-8 pl-[121px] gap-[7px] " + (n === "Zombie" ? "bg-[linear-gradient(90deg,#383838_64px,#3d3d3d_64px)]" : "")}>
            <Cube />
            <span className="pb-[2px]">{n}</span>
          </li>
        ))}
      </ul>
    </section>
  );
}

function ConsolePanel() {
  const cell = "h-10 border-r-2 border-[#202020] shrink-0 flex items-center ";
  return (
    <section className="flex flex-col flex-[383_1_0] min-h-0">
      <TabBar>
        <Tab active icon={<ConsoleIcon />} title="Console" className="pl-[18px] gap-[10px] w-[174px]" />
      </TabBar>
      <div className="flex items-center h-[42px] shrink-0 bg-[#303030] border-b-2 border-[#1c1c1c] overflow-hidden">
        <button type="button" className={cell + "w-[114px] pl-2 gap-[9px]"}>
          Clear
          <span className="w-[2px] h-6 bg-[#262626]" />
          <Down />
        </button>
        <button type="button" className={cell + "w-[119px] bg-[#404040] text-[#9c9c9c] justify-center"}>Collapse</button>
        <button type="button" aria-label="Messages 0" className={cell + "w-[68px] bg-[#404040] justify-center gap-[6px]"}>
          <Icon box="0 0 26 28" className="w-[26px] h-7 text-[#6a6a6a]">
            <path d="M13 0a13 13 0 0 1 10 21v7l-6-3A13 13 0 1 1 13 0z" fill="currentColor" stroke="none" />
            <path d="M13 5v10M13 18v3.500" stroke="#3a3a3a" strokeWidth="3.500" />
          </Icon>
          0
        </button>
        <button type="button" aria-label="Warnings 0" className={cell + "w-[68px] bg-[#404040] justify-center gap-[6px]"}>
          <Icon box="0 0 26 26" className="w-[26px] h-[26px] text-[#6a6a6a]">
            <path d="M13 0L26 24.500 25 26H1L0 24.500z" fill="currentColor" stroke="none" />
            <path d="M13 8v9M13 20v3.500" stroke="#3a3a3a" strokeWidth="3.200" />
          </Icon>
          0
        </button>
        <button type="button" aria-label="Errors" className={cell + "w-[68px] bg-[#404040] pl-[10px]"}>
          <Icon box="0 0 26 26" className="w-[26px] h-[26px] text-[#a4a4a4]">
            <path d="M8 0h10l8 8v10l-8 8H8l-8-8V8z" fill="currentColor" stroke="none" />
            <path d="M13 4v12M13 19v3.500" stroke="#303030" strokeWidth="3.500" />
          </Icon>
        </button>
      </div>
      <div className="flex-[183_1_0] bg-[#2d2d2d] border-b-2 border-[#1c1c1c]" />
      <div className="flex-[120_1_0] bg-[#2d2d2d]" />
    </section>
  );
}

function ProjectPanel() {
  const cell = "h-10 border-l-2 border-[#202020] ";
  const row = "flex items-center h-8 pb-[2px] shrink-0 whitespace-nowrap overflow-hidden ";
  const fileRow = "flex items-center h-8 pt-[2px] shrink-0 whitespace-nowrap overflow-hidden ";
  return (
    <section className="flex flex-col min-h-0 min-w-0">
      <TabBar lock>
        <Tab active icon={<Folder />} title="Project" className="pl-4 gap-2 w-[162px]" />
      </TabBar>
      <div className="flex items-center h-[42px] shrink-0 bg-[#303030] border-b-2 border-[#1c1c1c]">
        <PlusMenu />
        <Search label="Search project" icon={<SearchPlain />} className="flex-1 min-w-0 ml-7 mr-[5px]" />
        <IconButton label="Filter by type" className={cell + "w-[52px]"}><Shapes /></IconButton>
        <IconButton label="Filter by label" className={cell + "w-[52px]"}><Tag /></IconButton>
        <IconButton label="Favorite" className={cell + "w-[52px] text-[#6e6e6e]"}><Star /></IconButton>
        <button type="button" aria-label="Hidden packages" className={cell + "w-[68px] flex items-center justify-center gap-1"}><EyeOff />7</button>
      </div>
      <div className="flex-1 min-h-0 grid grid-cols-[223fr_237fr]">
        <div className="flex flex-col min-w-0 bg-[#2d2d2d] border-r-2 border-[#1c1c1c]">
          <div className={row + "pl-2 font-semibold"}><Foldout /><Star className="ml-[10px] text-[#cc9a0a]" /><span className="ml-[10px]">Favorites</span></div>
          {["All Materials", "All Models", "All Prefabs"].map((n) => (
            <div key={n} className={row + "pl-16 gap-2 mr-1"}><BigSearch /><span className="overflow-hidden">{n}</span></div>
          ))}
          <div className={row + "mt-[30px] pl-2 font-semibold bg-[#3d3d3d]"}><Foldout /><span className="ml-[9px]"><FolderOpen /></span><span className="ml-[7px]">Assets</span></div>
          <div className={row + "pl-16 gap-2"}><Folder />Scenes</div>
          <div className={row + "pl-[10px] font-semibold"}><FoldoutRight /><span className="ml-[10px]"><Folder /></span><span className="ml-[10px]">Packages</span></div>
        </div>
        <div className="flex flex-col min-w-0 bg-[#292929]">
          <div className="flex items-center h-[42px] shrink-0 pl-[7px] bg-[#333] border-b-2 border-[#202020] font-semibold">Assets</div>
          <div className={fileRow + "pl-[35px] gap-2"}><Folder />Scenes</div>
          <div className={fileRow + "pl-[35px] gap-2"}><ScriptIcon />ZombieManager</div>
          <div className="mt-auto flex items-center h-[42px] pl-[95px] pr-8 bg-[#333] border-t-2 border-[#202020]">
            <input
              type="range"
              aria-label="Icon size"
              defaultValue={0}
              className="w-full min-w-0 h-5 appearance-none bg-[linear-gradient(#4f4f4f,#4f4f4f)] bg-[length:100%_4px] bg-center bg-no-repeat [&::-webkit-slider-thumb]:appearance-none [&::-webkit-slider-thumb]:size-5 [&::-webkit-slider-thumb]:rounded-full [&::-webkit-slider-thumb]:bg-[#808080]"
            />
          </div>
        </div>
      </div>
    </section>
  );
}

function ComponentHeader({ icon, title, toggle }: { icon: React.ReactNode; title: string; toggle?: boolean }) {
  return (
    <div className="flex items-center h-11 shrink-0 pl-3 pr-[22px] bg-[#313131] border-t-2 border-t-[#191919] border-b-2 border-b-[#282828] font-semibold">
      <Foldout />
      <span className="ml-3 w-8 flex justify-start">{icon}</span>
      <span className="ml-[6px] w-7">{toggle && <Check label={title} checked />}</span>
      <h2 className="ml-3 whitespace-nowrap">{title}</h2>
      <span className="ml-auto flex items-center gap-5">
        <IconButton label="Help" className=""><HelpIcon /></IconButton>
        <IconButton label="Presets" className=""><Preset /></IconButton>
        <IconButton label="More" className="ml-[6px]"><Dots /></IconButton>
      </span>
    </div>
  );
}

function Row({ label, indent, dim, children }: { label: string; indent?: boolean; dim?: boolean; children: React.ReactNode }) {
  return (
    <div className="grid grid-cols-[241fr_262fr] items-center h-9">
      <span className={(indent ? "pl-[30px] " : "") + (dim ? "text-[#606060]" : "text-[#959595]")}>{label}</span>
      {children}
    </div>
  );
}

const selectBox = "h-9 pb-[2px] pl-[6px] bg-[#414141] border-2 border-[#252525] rounded-[6px] text-[#b4b4b4]";

function ObjectField({ icon, text, dim }: { icon: React.ReactNode; text: string; dim?: boolean }) {
  return (
    <span className={"flex items-center h-9 min-w-0 border-2 rounded-[6px] overflow-hidden " + (dim ? "bg-[#272727] border-[#212121] text-[#606060]" : "bg-[#202020] border-[#191919]")}>
      <span className={"ml-[6px] " + (dim ? "opacity-50" : "")}>{icon}</span>
      <span className="ml-[5px] flex-1 whitespace-nowrap">{text}</span>
      <IconButton label={"Select " + text} className={"w-9 h-full " + (dim ? "" : "bg-[#292929]")}><Picker /></IconButton>
    </span>
  );
}

function InspectorPanel() {
  const body = "flex flex-col gap-1 pl-[38px] pr-[7px] ";
  const vectors: [string, string[]][] = [
    ["Position", ["6.897952", "0.456671", "0"]],
    ["Rotation", ["0", "0", "0"]],
    ["Scale", ["1", "1", "1"]],
  ];
  return (
    <section className="flex flex-col min-h-0 min-w-0 bg-[#2d2d2d]">
      <TabBar lock>
        <Tab active icon={<InfoIcon />} title="Inspector" className="pl-[18px] gap-[9px] w-[186px]" />
      </TabBar>
      <div className="flex bg-[#303030] pt-[18px] pb-[17px] pl-[14px] pr-[7px]">
        <div className="flex items-end w-[56px] h-[48px] mt-1 shrink-0">
          <Cube className="w-[42px] h-[46px] mb-1" />
          <Down className="w-4 h-[9px] -ml-1" />
        </div>
        <div className="flex-1 min-w-0 flex flex-col gap-3">
          <div className="flex items-center h-9 pl-[22px]">
            <Check label="Active" checked />
            <input aria-label="Name" defaultValue="Zombie" className={fieldBox + " ml-3 flex-1 min-w-0 h-9 px-[5px] font-semibold outline-none"} />
            <Check label="Static" className="ml-[6px]" />
            <button type="button" className="ml-2 mr-[6px] flex items-center gap-[6px] text-[#8c8c8c]">Static<span className="text-[#a0a0a0]"><Down /></span></button>
          </div>
          <div className="flex items-center h-9 pl-[14px] text-[#959595]">
            <span>Tag</span>
            <Pick label="Tag" value="Untagged" className={selectBox + " ml-[10px] w-[164px]"} arrow="mr-[10px]" />
            <span className="ml-auto">Layer</span>
            <Pick label="Layer" value="Default" className={selectBox + " ml-[9px] w-[144px]"} arrow="mr-[10px]" />
          </div>
        </div>
      </div>
      <ComponentHeader icon={<TransformIcon />} title="Transform" />
      <div className={body + "pt-2 pb-[18px]"}>
        {vectors.map(([label, values]) => (
          <div key={label} className="grid grid-cols-[121fr_382fr] items-center h-9 text-[#959595]">
            <span>{label}</span>
            <div className="grid grid-cols-3 gap-[11px] pl-[10px]">
              {["X", "Y", "Z"].map((axis, i) => (
                <label key={axis} className="flex items-center gap-[6px] min-w-0">
                  <span className="w-4">{axis}</span>
                  <input defaultValue={values[i]} className={fieldBox + " flex-1 min-w-0 h-9 pl-1 pr-[2px] text-[#a8a8a8] outline-none"} />
                </label>
              ))}
            </div>
          </div>
        ))}
      </div>
      <ComponentHeader icon={<SpriteRendererIcon />} title="Sprite Renderer" toggle />
      <div className={body + "pt-2 pb-[18px]"}>
        <Row label="Sprite"><ObjectField icon={<SpriteIcon />} text="Circle" /></Row>
        <Row label="Color">
          <span className="flex items-center h-9 border-2 border-[#191919] rounded-r-[6px]">
            <input type="color" aria-label="Color" defaultValue="#ffffff" className="flex-1 min-w-0 h-8 appearance-none bg-white [&::-webkit-color-swatch-wrapper]:p-0 [&::-webkit-color-swatch]:border-0" />
            <IconButton label="Pick color" className="w-9 h-8"><Dropper /></IconButton>
          </span>
        </Row>
        <Row label="Flip">
          <span className="flex items-center text-[#959595]">
            <Check label="Flip X" /><span className="ml-2 w-6">X</span>
            <Check label="Flip Y" /><span className="ml-2">Y</span>
          </span>
        </Row>
        <Row label="Draw Mode"><Pick label="Draw Mode" value="Simple" className={selectBox} arrow="mr-[10px]" /></Row>
        <Row label="Mask Interaction"><Pick label="Mask Interaction" value="None" className={selectBox} arrow="mr-[10px]" /></Row>
        <Row label="Sprite Sort Point"><Pick label="Sprite Sort Point" value="Center" className={selectBox} arrow="mr-[10px]" /></Row>
        <Row label="Material"><ObjectField icon={<MaterialIcon />} text="Sprites-Default" /></Row>
        <div className="flex items-center h-9 -ml-[26px] gap-[10px] font-semibold text-[#9c9c9c]"><Foldout />Additional Settings</div>
        <Row label="Sorting Layer" indent><Pick label="Sorting Layer" value="Default" className={selectBox} arrow="mr-[10px]" /></Row>
        <Row label="Order in Layer" indent><input aria-label="Order in Layer" defaultValue="0" className={fieldBox + " min-w-0 h-9 px-1 outline-none"} /></Row>
      </div>
      <ComponentHeader icon={<ScriptIcon />} title="Zombie Manager (Script)" toggle />
      <div className={body + "pt-2 pb-[15px]"}>
        <Row label="Script" dim><ObjectField icon={<ScriptIcon className="w-[18px] h-5" />} text="ZombieManager" dim /></Row>
      </div>
      <div className="flex h-[110px] shrink-0 pr-[7px] border-t-2 border-[#191919] bg-[#303030]">
        <div className="flex flex-col justify-between w-[89px] shrink-0 pt-5 pb-3">
          <span className="ml-[39px] w-[50px] h-[50px] bg-[#cbcbcb] border border-[#dedede]" />
          <span className="ml-[14px]"><FoldoutRight /></span>
        </div>
        <div className="flex-1 min-w-0 flex flex-col pt-2 gap-3">
          <div className="flex items-center h-9 pl-[23px] pr-[5px] text-[#8a8a8a]">
            <h2 className="text-[26px] whitespace-nowrap">Sprites-Default (Material)</h2>
            <span className="ml-auto flex items-center gap-5 text-[#a4a4a4]">
              <IconButton label="Help" className=""><HelpIcon /></IconButton>
              <IconButton label="More" className=""><Dots /></IconButton>
            </span>
          </div>
          <div className="flex items-center h-9 pl-[17px] text-[#606060]">
            <span>Shader</span>
            <Pick label="Shader" value="Sprites/Default" className="ml-auto w-[240px] h-9 pb-[2px] pl-[6px] bg-[#363636] border-2 border-[#2c2c2c] rounded-[6px] text-[#727272]" arrow="mr-[10px] opacity-60" />
            <button type="button" className="ml-[6px] w-[88px] h-9 pb-[2px] bg-[#363636] border-2 border-[#2c2c2c] rounded-[6px] text-[#808080]">Edit...</button>
          </div>
        </div>
      </div>
      <div className="h-6 shrink-0 border-y-2 border-[#191919]" />
      <div className="pt-4 pl-11 pr-[45px]">
        <button type="button" className="w-full h-12 bg-[#454545] border-2 border-[#222] rounded-[6px] text-[#c4c4c4]">Add Component</button>
      </div>
    </section>
  );
}

function StatusBar() {
  const cell = "w-[52px] h-9 border-l-2 border-[#1f1f1f]";
  return (
    <footer className="flex items-end justify-end h-[42px] shrink-0 text-[#a0a0a0]">
      <IconButton label="Debugger" className={cell}>
        <Icon box="0 0 28 30" className="w-7 h-[30px]">
          <path d="M7 7a7 6 0 0 1 14 0zM6 9h16v11a8 8 0 0 1-16 0z" fill="currentColor" stroke="none" />
          <path d="M9 4L6 0M19 4l3-4M6 12L1 8M22 12l5-4M6 17H0M22 17h6M7 22l-5 4M21 22l5 4" strokeWidth="2.200" />
          <path d="M4 1.500L29 28" stroke="#141414" strokeWidth="3" />
          <path d="M1 1.500L27 29" strokeWidth="2.200" />
        </Icon>
      </IconButton>
      <IconButton label="Cache server" className={cell}>
        <Icon box="0 0 28 30" className="w-7 h-[30px]">
          <path d="M1 5.500C1 0 25 0 25 5.500S1 11 1 5.500zM1 9.500c4 4 20 4 24 0v6c-4 4-20 4-24 0zM1 19.500c4 4 20 4 24 0V24c-3 5-21 5-24 0z" fill="currentColor" stroke="none" />
          <path d="M3 1.500L29 27" stroke="#141414" strokeWidth="3" />
          <path d="M0 1.500L27 29" strokeWidth="2.200" />
        </Icon>
      </IconButton>
      <IconButton label="Auto lighting" className={cell}>
        <Icon box="0 0 28 30" className="w-7 h-[30px]">
          <path d="M5 4C12-1 21 1 25 8M2 20c-2-4-1-9 1-12M26 13c1 6-2 12-7 14M3 22c3 5 8 7 13 6" strokeWidth="2.200" />
          <path d="M28 3v8h-7zM0 27v-8h7z" fill="currentColor" stroke="none" />
          <path d="M14 5a7 7 0 0 1 4 12.500V20h-8v-2.500A7 7 0 0 1 14 5zM11 21.500h6V24h-6z" fill="currentColor" stroke="none" />
          <path d="M4 1.500L29 27" stroke="#141414" strokeWidth="3" />
          <path d="M1 1.500L27 28" strokeWidth="2.200" />
        </Icon>
      </IconButton>
      <IconButton label="Progress" className={cell}>
        <Icon box="0 0 28 28" className="w-7 h-7">
          <circle cx="14" cy="14" r="13" strokeWidth="2" />
          <path d="M8.500 14l4 4.500L19.500 11" strokeWidth="2.400" />
        </Icon>
      </IconButton>
    </footer>
  );
}

export default function App() {
  return (
    <div className="min-h-screen flex flex-col bg-[#141414] text-[#a4a4a4] text-[24px] leading-8 font-['Inter','Liberation_Sans',sans-serif] overflow-hidden">
      <TitleBar />
      <Toolbar />
      <main className="flex-1 grid grid-cols-[1127fr_400fr_460fr_549fr] gap-1">
        <div className="flex flex-col gap-1 min-w-0">
          <ScenePanel />
          <GamePanel />
        </div>
        <div className="flex flex-col gap-1 min-w-0">
          <HierarchyPanel />
          <ConsolePanel />
        </div>
        <ProjectPanel />
        <InspectorPanel />
      </main>
      <StatusBar />
    </div>
  );
}
